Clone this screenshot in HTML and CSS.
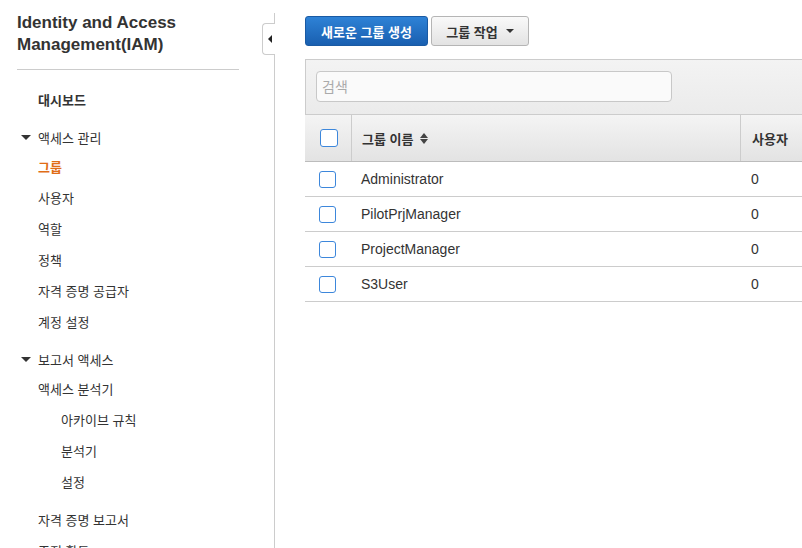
FILE: index.html
```html
<!DOCTYPE html>
<html lang="ko">
<head>
<meta charset="utf-8">
<title>IAM 그룹</title>
<link rel="stylesheet" href="styles.css">
</head>
<body>
<div class="app">
  <aside class="sidebar">
    <h1 class="title">Identity and Access Management(IAM)</h1>
    <hr class="rule">
    <nav class="nav">
      <a class="item strong">대시보드</a>
      <div class="group">
        <div class="head"><span class="caret"></span>액세스 관리</div>
        <a class="item active">그룹</a>
        <a class="item">사용자</a>
        <a class="item">역할</a>
        <a class="item">정책</a>
        <a class="item">자격 증명 공급자</a>
        <a class="item">계정 설정</a>
      </div>
      <div class="group">
        <div class="head"><span class="caret"></span>보고서 액세스</div>
        <a class="item">액세스 분석기</a>
        <a class="item sub">아카이브 규칙</a>
        <a class="item sub">분석기</a>
        <a class="item sub">설정</a>
      </div>
      <div class="group">
        <a class="item">자격 증명 보고서</a>
        <a class="item">조직 활동</a>
      </div>
    </nav>
  </aside>
  <div class="divider"><span class="toggle"><span class="tri-left"></span></span></div>
  <main class="main">
    <div class="toolbar">
      <button class="btn primary">새로운 그룹 생성</button>
      <button class="btn">그룹 작업 <span class="tri-down"></span></button>
    </div>
    <section class="panel">
      <div class="filter">
        <input class="search" type="text" placeholder="검색">
      </div>
      <div class="table">
        <div class="row header">
          <div class="cell check"><span class="box"></span></div>
          <div class="cell name">그룹 이름 <span class="sort"><span class="up"></span><span class="down"></span></span></div>
          <div class="cell users">사용자</div>
        </div>
        <div class="row">
          <div class="cell check"><span class="box"></span></div>
          <div class="cell name">Administrator</div>
          <div class="cell users">0</div>
        </div>
        <div class="row">
          <div class="cell check"><span class="box"></span></div>
          <div class="cell name">PilotPrjManager</div>
          <div class="cell users">0</div>
        </div>
        <div class="row">
          <div class="cell check"><span class="box"></span></div>
          <div class="cell name">ProjectManager</div>
          <div class="cell users">0</div>
        </div>
        <div class="row">
          <div class="cell check"><span class="box"></span></div>
          <div class="cell name">S3User</div>
          <div class="cell users">0</div>
        </div>
      </div>
    </section>
  </main>
</div>
</body>
</html>
```
FILE: styles.css
```css
* { box-sizing: border-box; }
html, body { margin: 0; padding: 0; background: #fff; }
body {
  font-family: "Liberation Sans", "Noto Sans CJK KR", sans-serif;
  color: #333;
  width: 802px;
  height: 548px;
  overflow: hidden;
}
.app { display: flex; height: 548px; }

.sidebar {
  width: 274px;
  flex: none;
  padding: 12px 35px 0 17px;
}
.title {
  margin: 0;
  font-size: 17px;
  line-height: 22px;
  font-weight: bold;
  color: #333;
}
.rule {
  margin: 13px 0 0;
  border: 0;
  border-top: 1px solid #ccc;
  height: 0;
}
.nav { display: flex; flex-direction: column; padding-top: 16px; }
.item {
  display: block;
  font-size: 13px;
  line-height: 31px;
  height: 31px;
  padding-left: 21px;
  color: #333;
  white-space: nowrap;
}
.item.strong { font-weight: bold; height: 30px; line-height: 30px; color: #333; }
.item.active { color: #e06d16; font-weight: bold; }
.item.sub { padding-left: 44px; }
.group { margin-top: 7px; }
.head {
  display: flex;
  align-items: center;
  font-size: 13px;
  height: 29px;
  color: #333;
  padding-left: 4px;
}
.caret {
  width: 0; height: 0;
  border-left: 5px solid transparent;
  border-right: 5px solid transparent;
  border-top: 5px solid #333;
  margin-right: 7px;
}

.divider {
  width: 1px;
  flex: none;
  margin-top: 13px;
  background: #ccc;
  position: relative;
}
.toggle {
  position: absolute;
  left: -12px;
  top: 10px;
  width: 13px;
  height: 32px;
  background: #fff;
  border: 1px solid #ccc;
  border-right: 0;
  border-radius: 4px 0 0 4px;
  display: flex;
  align-items: center;
  justify-content: center;
}
.tri-left {
  width: 0; height: 0;
  border-top: 4px solid transparent;
  border-bottom: 4px solid transparent;
  border-right: 4px solid #222;
  margin-left: 2px;
}

.main {
  flex: 1;
  min-width: 0;
  overflow: hidden;
  padding: 16px 0 0 30px;
}
.toolbar { display: flex; gap: 3px; }
.btn {
  height: 30px;
  border-radius: 3px;
  font-family: inherit;
  font-size: 13px;
  font-weight: bold;
  padding: 0;
  border: 1px solid #b5b5b5;
  background: linear-gradient(#f9f9f9, #e3e3e3);
  color: #333;
  width: 98px;
  display: flex;
  align-items: center;
  justify-content: center;
  gap: 8px;
}
.btn.primary {
  width: 123px;
  color: #fff;
  border-color: #1a5aa3;
  background: linear-gradient(#2e82d6, #195fb0);
}
.tri-down {
  width: 0; height: 0;
  border-left: 4px solid transparent;
  border-right: 4px solid transparent;
  border-top: 4px solid #333;
}

.panel {
  margin-top: 13px;
  width: 620px;
}
.filter {
  height: 55px;
  padding: 11px 0 0 10px;
  border: 1px solid #ccc;
  border-right: 0;
  border-bottom: 0;
  background: linear-gradient(#f3f3f3, #ebebeb);
}
.search {
  display: block;
  width: 356px;
  height: 31px;
  border: 1px solid #c8c8c8;
  border-radius: 4px;
  background: #fafafa;
  font-family: inherit;
  font-size: 14px;
  padding: 0 5px;
  color: #333;
}
.search::placeholder { color: #aaa; }

.table { display: flex; flex-direction: column; }
.row {
  display: grid;
  grid-template-columns: 47px 389px 1fr;
  height: 35px;
  border-bottom: 1px solid #ccc;
  align-items: center;
  font-size: 14px;
}
.row.header {
  height: 48px;
  border-top: 1px solid #ccc;
  border-bottom: 1px solid #bcbcbc;
  background: linear-gradient(#f4f4f4, #e3e3e3);
  font-size: 13px;
  font-weight: bold;
  align-items: stretch;
}
.cell { display: flex; align-items: center; white-space: nowrap; }
.cell.check { justify-content: flex-start; padding-left: 14px; }
.cell.name { padding-left: 9px; }
.cell.users { padding-left: 10px; }
.header .cell.check { padding-left: 15px; border-right: 1px solid #ccc; }
.header .cell.name { padding-left: 10px; border-right: 1px solid #ccc; }
.header .cell.users { padding-left: 11px; }
.box {
  width: 17px;
  height: 17px;
  border: 1px solid #3d87db;
  border-radius: 3px;
  background: #fff;
}
.header .box { width: 18px; height: 18px; }
.sort {
  display: inline-flex;
  flex-direction: column;
  gap: 1px;
  margin-left: 7px;
}
.sort .up, .sort .down {
  width: 0; height: 0;
  border-left: 4px solid transparent;
  border-right: 4px solid transparent;
}
.sort .up { border-bottom: 5px solid #444; }
.sort .down { border-top: 5px solid #444; }
```
